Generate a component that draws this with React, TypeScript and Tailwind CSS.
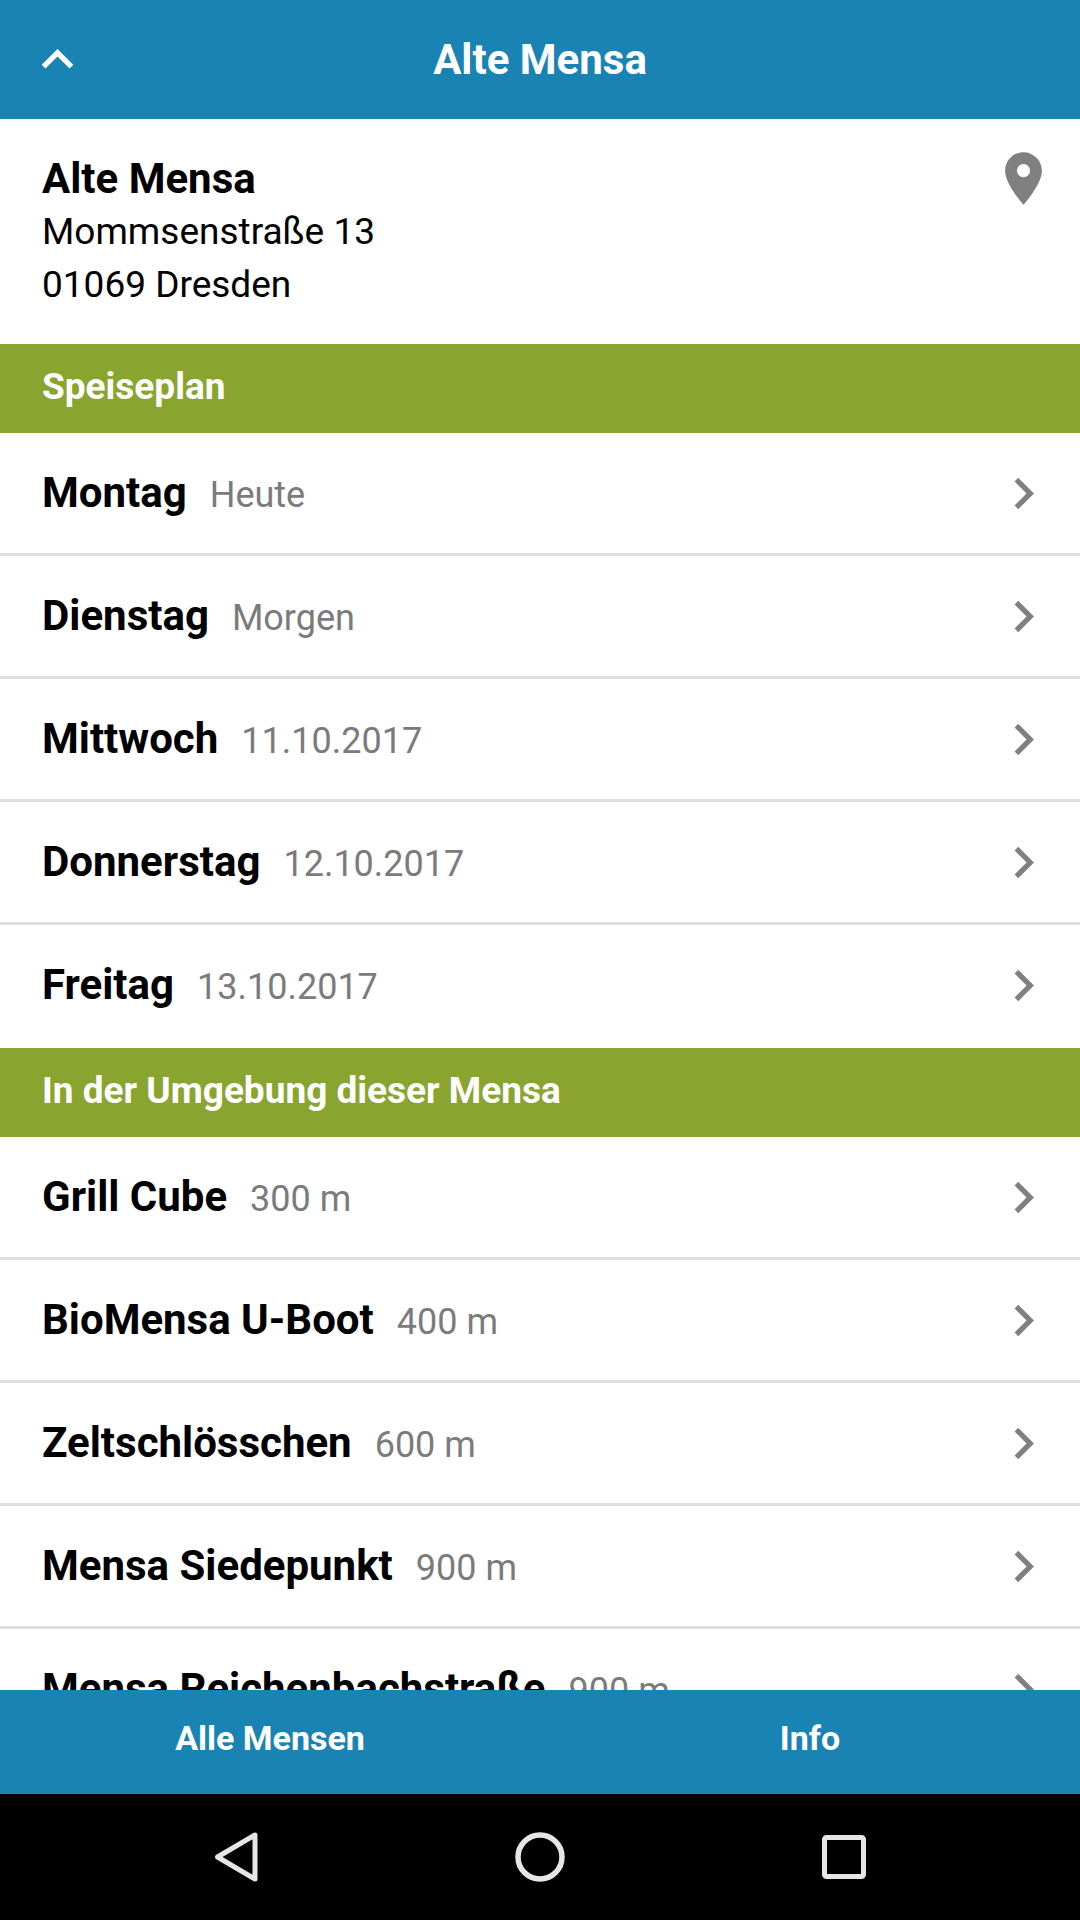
import { MdChevronRight, MdKeyboardArrowUp, MdPlace } from "react-icons/md";

type Item = {
  name: string;
  note: string;
};

const days: Item[] = [
  { name: "Montag", note: "Heute" },
  { name: "Dienstag", note: "Morgen" },
  { name: "Mittwoch", note: "11.10.2017" },
  { name: "Donnerstag", note: "12.10.2017" },
  { name: "Freitag", note: "13.10.2017" },
];

const nearby: Item[] = [
  { name: "Grill Cube", note: "300 m" },
  { name: "BioMensa U-Boot", note: "400 m" },
  { name: "Zeltschlösschen", note: "600 m" },
  { name: "Mensa Siedepunkt", note: "900 m" },
  { name: "Mensa Reichenbachstraße", note: "900 m" },
];

const Section = ({ title, items }: { title: string; items: Item[] }) => {
  return (
    <section>
      <h2 className="bg-[#8aa52f] px-[42px] pt-4 pb-5 text-[37px] leading-[53px] font-bold text-white">
        {title}
      </h2>
      <ul>
        {items.map((item) => (
          <li
            key={item.name}
            className="border-b-[3px] border-[#dedede] last:border-transparent"
          >
            <button className="flex h-[120px] w-full items-center justify-between pr-[25px] pl-[42px] text-left">
              <span className="flex items-baseline gap-[23px] pt-0.5">
                <span className="text-[42px] leading-[53px] font-bold">
                  {item.name}
                </span>
                <span className="text-[36px] leading-[53px] text-[#7b7b7b]">
                  {item.note}
                </span>
              </span>
              <MdChevronRight className="size-[63px] shrink-0 text-[#808080]" />
            </button>
          </li>
        ))}
      </ul>
    </section>
  );
};

const App = () => {
  return (
    <div className="flex h-screen flex-col bg-white font-['Roboto',sans-serif] text-black">
      <header className="grid h-[119px] shrink-0 grid-cols-[1fr_auto_1fr] items-center bg-[#1983b4] px-[26px] text-white">
        <button aria-label="Zurück" className="justify-self-start">
          <MdKeyboardArrowUp className="size-[63px]" />
        </button>
        <h1 className="text-[42px] leading-[53px] font-bold">Alte Mensa</h1>
      </header>

      <main className="min-h-0 flex-1 overflow-hidden">
        <div className="flex items-start justify-between py-[33px] pr-[25px] pl-[42px]">
          <address className="text-[37px] leading-[53px] not-italic">
            <p className="text-[42px] font-bold">Alte Mensa</p>
            <p>Mommsenstraße 13</p>
            <p>01069 Dresden</p>
          </address>
          <button aria-label="Karte" className="-mt-[5px]">
            <MdPlace className="size-[63px] text-[#808080]" />
          </button>
        </div>
        <Section title="Speiseplan" items={days} />
        <Section title="In der Umgebung dieser Mensa" items={nearby} />
      </main>

      <nav className="flex shrink-0 bg-[#1983b4] text-[34px] leading-[53px] font-bold text-white">
        <button className="flex-1 pt-[22px] pb-[29px]">Alle Mensen</button>
        <button className="flex-1 pt-[22px] pb-[29px]">Info</button>
      </nav>

      <div className="flex h-[126px] shrink-0 bg-black px-21 text-[#e6e6e6]">
        <button aria-label="Back" className="flex flex-1 items-center justify-center">
          <svg viewBox="0 0 50 50" className="size-[50px]" fill="none" stroke="currentColor" strokeWidth="5" strokeLinejoin="round">
            <path d="M44 3v44L6.500 25z" />
          </svg>
        </button>
        <button aria-label="Home" className="flex flex-1 items-center justify-center">
          <svg viewBox="0 0 50 50" className="size-[50px]" fill="none" stroke="currentColor" strokeWidth="5.500">
            <circle cx="25" cy="25" r="22" />
          </svg>
        </button>
        <button aria-label="Recents" className="flex flex-1 items-center justify-center">
          <svg viewBox="0 0 50 50" className="size-[50px]" fill="none" stroke="currentColor" strokeWidth="5">
            <rect x="5.500" y="5.500" width="39" height="39" rx="2" />
          </svg>
        </button>
      </div>
    </div>
  );
};

export default App;
